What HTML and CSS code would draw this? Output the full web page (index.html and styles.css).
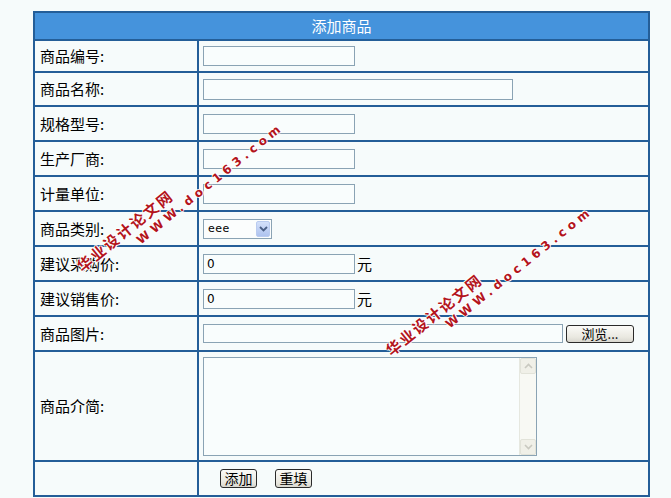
FILE: index.html
```html
<!DOCTYPE html>
<html lang="zh-CN">
<head>
<meta charset="utf-8">
<title>添加商品</title>
<link rel="stylesheet" href="styles.css">
</head>
<body>
<div class="page">
  <form class="form">
    <div class="head">添加商品</div>
    <div class="row h32">
      <div class="label">商品编号:</div>
      <div class="field"><input class="text short" type="text"></div>
    </div>
    <div class="row h34">
      <div class="label">商品名称:</div>
      <div class="field"><input class="text long" type="text"></div>
    </div>
    <div class="row">
      <div class="label">规格型号:</div>
      <div class="field"><input class="text short" type="text"></div>
    </div>
    <div class="row">
      <div class="label">生产厂商:</div>
      <div class="field"><input class="text short" type="text"></div>
    </div>
    <div class="row">
      <div class="label">计量单位:</div>
      <div class="field"><input class="text short" type="text"></div>
    </div>
    <div class="row">
      <div class="label">商品类别:</div>
      <div class="field">
        <div class="select">
          <span class="select-text">eee</span>
          <span class="select-btn">
            <svg width="9" height="6" viewBox="0 0 9 6"><path d="M1 1 L4.5 4.5 L8 1" fill="none" stroke="#4a5f86" stroke-width="1.8"/></svg>
          </span>
        </div>
      </div>
    </div>
    <div class="row">
      <div class="label">建议采购价:</div>
      <div class="field"><input class="text short" type="text" value="0"><span class="unit">元</span></div>
    </div>
    <div class="row">
      <div class="label">建议销售价:</div>
      <div class="field"><input class="text short" type="text" value="0"><span class="unit">元</span></div>
    </div>
    <div class="row">
      <div class="label">商品图片:</div>
      <div class="field">
        <input class="text file" type="text">
        <button class="btn browse" type="button">浏览...</button>
      </div>
    </div>
    <div class="row h110">
      <div class="label">商品介简:</div>
      <div class="field">
        <div class="textarea">
          <textarea class="ta"></textarea>
          <div class="scroll">
            <span class="sbtn"><svg width="9" height="6" viewBox="0 0 9 6"><path d="M1 5 L4.5 1.5 L8 5" fill="none" stroke="#c9c9c0" stroke-width="1.6"/></svg></span>
            <span class="sbtn"><svg width="9" height="6" viewBox="0 0 9 6"><path d="M1 1 L4.5 4.5 L8 1" fill="none" stroke="#c9c9c0" stroke-width="1.6"/></svg></span>
          </div>
        </div>
      </div>
    </div>
    <div class="row last">
      <div class="label"></div>
      <div class="field actions">
        <button class="btn act" type="button">添加</button>
        <button class="btn act" type="button">重填</button>
      </div>
    </div>
  </form>
  <div class="wm wm1"><span class="wm-cn">华业设计论文网</span><span class="wm-url">WWW.doc163.com</span></div>
  <div class="wm wm2"><span class="wm-cn">华业设计论文网</span><span class="wm-url">WWW.doc163.com</span></div>
</div>
</body>
</html>
```

FILE: styles.css
```css
html, body {
  margin: 0;
  padding: 0;
  background: #f6fbfb;
}
body {
  font-family: "Noto Sans CJK SC", "Noto Sans", sans-serif;
  color: #000;
}
.page {
  position: relative;
  width: 671px;
  height: 498px;
  overflow: hidden;
  padding: 11px 0 0 33px;
  box-sizing: border-box;
}
.form {
  margin: 0;
  width: 617px;
  border: 2px solid #245e98;
  border-bottom: none;
  box-sizing: border-box;
  background: #f6fbfb;
}
.head {
  height: 28px;
  box-sizing: border-box;
  border-bottom: 2px solid #245e98;
  background: #4593dc;
  color: #fff;
  font-size: 15px;
  line-height: 26px;
  text-align: center;
}
.row {
  display: grid;
  grid-template-columns: 164px 1fr;
  height: 35px;
  box-sizing: border-box;
  border-bottom: 2px solid #245e98;
}
.row.h32 { height: 32px; }
.row.h34 { height: 34px; }
.row.h110 { height: 110px; }
.label {
  border-right: 2px solid #245e98;
  padding-left: 5px;
  display: flex;
  align-items: center;
  font-size: 15px;
  line-height: 18px;
}
.field {
  display: flex;
  align-items: center;
  padding-left: 4px;
}
.text {
  box-sizing: border-box;
  height: 20px;
  border: 1px solid #8aa3b4;
  background: #f9fdfd;
  margin: 0;
  padding: 0 3px;
  font-family: "DejaVu Sans", sans-serif;
  font-size: 12px;
  color: #000;
  outline: none;
}
.text.short { width: 152px; }
.text.long { width: 310px; height: 21px; }
.text.file { width: 360px; height: 19px; }
.unit {
  font-size: 15px;
  line-height: 18px;
  margin-left: 2px;
}
.select {
  box-sizing: border-box;
  width: 69px;
  height: 20px;
  border: 1px solid #8aa3b4;
  background: #fbfdfd;
  display: flex;
  align-items: center;
  justify-content: space-between;
  padding: 0 1px 0 4px;
}
.select-text {
  font-family: "DejaVu Sans", sans-serif;
  font-size: 11px;
  letter-spacing: 0.5px;
}
.select-btn {
  box-sizing: border-box;
  width: 14px;
  height: 16px;
  border: 1px solid #b9cbf0;
  border-radius: 2px;
  background: linear-gradient(#d3e0fa, #aec3ef);
  display: flex;
  align-items: center;
  justify-content: center;
}
.btn {
  box-sizing: border-box;
  border: 1px solid #2a2a2a;
  border-radius: 3px;
  background: linear-gradient(#fbfbf8, #e9e8e0 70%, #d8d7cf);
  font-family: "Noto Sans CJK SC", sans-serif;
  font-size: 13px;
  line-height: 15px;
  padding: 0;
  color: #000;
}
.browse {
  width: 68px;
  height: 18px;
  margin-left: 3px;
}
.textarea {
  box-sizing: border-box;
  width: 334px;
  height: 99px;
  border: 1px solid #8aa3b4;
  background: #f9fdfd;
  display: flex;
}
.ta {
  flex: 1;
  border: none;
  background: transparent;
  resize: none;
  outline: none;
  margin: 0;
  padding: 0;
}
.scroll {
  width: 16px;
  border-left: 1px solid #e6e8e0;
  background: #f8f9f4;
  display: flex;
  flex-direction: column;
  justify-content: space-between;
}
.sbtn {
  box-sizing: border-box;
  height: 16px;
  border: 1px solid #e2e3d9;
  border-radius: 2px;
  background: #f0f0e8;
  display: flex;
  align-items: center;
  justify-content: center;
}
.actions {
  padding-left: 21px;
  gap: 18px;
}
.act {
  width: 37px;
  height: 19px;
  font-size: 14px;
}
.wm {
  position: absolute;
  transform-origin: 0 0;
  transform: rotate(-39deg);
  color: #b3141c;
  font-weight: bold;
  white-space: nowrap;
  text-shadow: 1px 0 0 #fff, -1px 0 0 #fff, 0 1px 0 #fff, 0 -1px 0 #fff;
}
.wm1 { left: 73px; top: 261px; }
.wm2 { left: 382px; top: 345px; }
.wm-cn {
  display: block;
  font-family: "Noto Sans CJK SC", sans-serif;
  font-size: 15px;
  line-height: 18px;
  letter-spacing: 2px;
}
.wm-url {
  display: block;
  margin-left: 63px;
  font-family: "DejaVu Sans", sans-serif;
  font-size: 12px;
  line-height: 16px;
  letter-spacing: 4.3px;
}
```
